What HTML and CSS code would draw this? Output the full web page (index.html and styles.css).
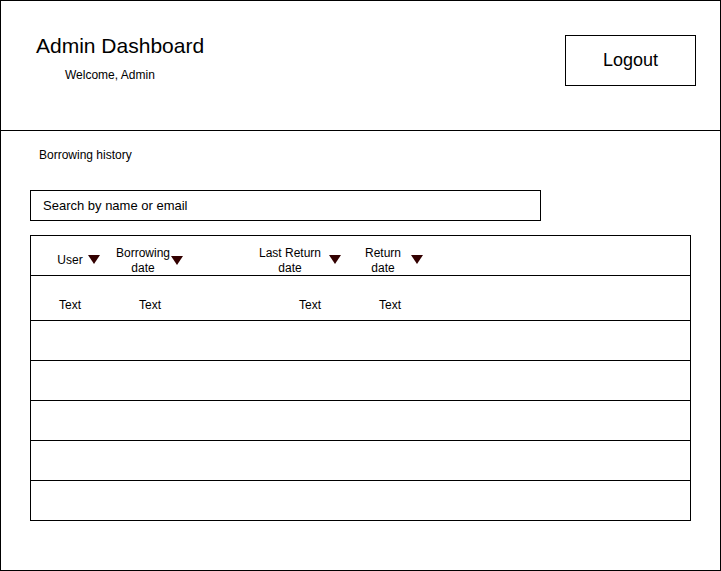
FILE: index.html
```html
<!DOCTYPE html>
<html lang="en">
<head>
<meta charset="utf-8">
<title>Admin Dashboard</title>
<link rel="stylesheet" href="styles.css">
</head>
<body>
<div class="frame">
  <header class="header">
    <div class="titles">
      <div class="title">Admin Dashboard</div>
      <div class="welcome">Welcome, Admin</div>
    </div>
    <div class="logout">Logout</div>
  </header>
  <main class="content">
    <div class="section-title">Borrowing history</div>
    <div class="search">Search by name or email</div>
    <div class="table">
      <div class="row head">
        <div class="hcell c1"><span class="label l1">User</span><span class="tri t1"></span></div>
        <div class="hcell c2"><span class="label l2">Borrowing<br>date</span><span class="tri t2"></span></div>
        <div class="hcell c3"><span class="label l3">Last Return<br>date</span><span class="tri t3"></span></div>
        <div class="hcell c4"><span class="label l4">Return<br>date</span><span class="tri t4"></span></div>
      </div>
      <div class="row data">
        <span class="dcell d1">Text</span>
        <span class="dcell d2">Text</span>
        <span class="dcell d3">Text</span>
        <span class="dcell d4">Text</span>
      </div>
      <div class="row empty"></div>
      <div class="row empty"></div>
      <div class="row empty"></div>
      <div class="row empty"></div>
      <div class="row empty last"></div>
    </div>
  </main>
</div>
</body>
</html>
```
FILE: styles.css
```css
* { box-sizing: border-box; }
html, body { margin: 0; padding: 0; background: #fff; }
body {
  font-family: "Liberation Sans", Arial, sans-serif;
  color: #000;
}
.frame {
  width: 721px;
  height: 571px;
  border: 1px solid #000;
}
.header {
  height: 130px;
  border-bottom: 1px solid #000;
  display: flex;
  justify-content: space-between;
  align-items: flex-start;
  padding: 34px 24px 0 35px;
}
.title {
  font-size: 21px;
  line-height: 24px;
  margin-top: -1px;
}
.welcome {
  font-size: 12px;
  line-height: 15px;
  margin-top: 10px;
  padding-left: 29px;
}
.logout {
  width: 131px;
  height: 51px;
  border: 1px solid #000;
  font-size: 18px;
  display: flex;
  align-items: center;
  justify-content: center;
}
.content {
  padding: 17px 0 0 29px;
}
.section-title {
  font-size: 12px;
  line-height: 15px;
  padding-left: 9px;
  margin-bottom: 27px;
}
.search {
  width: 511px;
  height: 31px;
  border: 1px solid #000;
  font-size: 13px;
  display: flex;
  align-items: center;
  padding-left: 12px;
}
.table {
  margin-top: 14px;
  width: 661px;
  border: 1px solid #000;
}
.row {
  border-bottom: 1px solid #000;
  height: 40px;
}
.row.last { border-bottom: none; height: 39px; }
.row.head {
  display: flex;
  align-items: flex-start;
  padding: 10px 0 0 24px;
}
.hcell {
  display: flex;
  align-items: flex-start;
  font-size: 12px;
  line-height: 15px;
}
.label {
  text-align: center;
  white-space: nowrap;
}
.l1 { width: 30px; padding-top: 7px; }
.l2 { width: 56px; }
.l3 { width: 62px; }
.l4 { width: 36px; }
.c2 { margin-left: 15px; }
.c3 { margin-left: 76px; }
.c4 { margin-left: 24px; }
.tri {
  width: 0;
  height: 0;
  border-left: 6px solid transparent;
  border-right: 6px solid transparent;
  border-top: 9px solid #330000;
  margin-top: 9px;
}
.t1 { margin-left: 3px; }
.t2 { margin-left: 0; margin-top: 10px; }
.t3 { margin-left: 8px; }
.t4 { margin-left: 10px; }
.row.data {
  height: 45px;
  display: flex;
  align-items: flex-start;
  padding: 22px 0 0 19px;
  font-size: 12px;
  line-height: 15px;
}
.dcell { width: 40px; text-align: center; }
.d2 { margin-left: 40px; }
.d3 { margin-left: 120px; }
.d4 { margin-left: 40px; }
```
